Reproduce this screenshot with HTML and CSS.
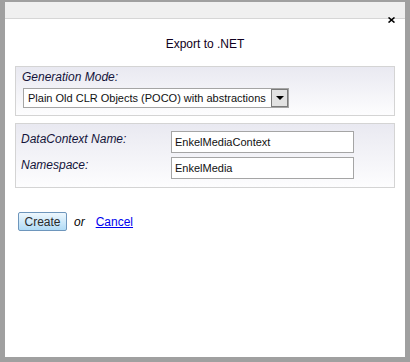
FILE: index.html
```html
<!DOCTYPE html>
<html lang="en">
<head>
    <meta charset="UTF-8">
    <title>Export to .NET</title>
    <link rel="stylesheet" href="styles.css">
</head>
<body>

    <!-- dialog window -->
    <div class="dialog">
        <div class="dialog-header">
            <a class="close-btn" href="#" title="Close">
                <svg width="7" height="6" viewBox="0 0 7 6"><path d="M0.5 0.5 L6.5 5.5 M6.5 0.5 L0.5 5.5" stroke="#000" stroke-width="1.6"/></svg>
            </a>
        </div>

        <div class="dialog-title">Export to .NET</div>

        <div class="box">
            <div class="label">Generation Mode:</div>
            <div class="select">
                <span class="select-text">Plain Old CLR Objects (POCO) with abstractions</span>
                <span class="select-arrow"></span>
            </div>
        </div>

        <div class="box box-fields">
            <label class="label" for="ctx-name">DataContext Name:</label>
            <input id="ctx-name" class="text-input" type="text" value="EnkelMediaContext">
            <label class="label" for="ns">Namespace:</label>
            <input id="ns" class="text-input" type="text" value="EnkelMedia">
        </div>

        <div class="actions">
            <button class="create-btn">Create</button>
            <span class="or">or</span>
            <a class="cancel-link" href="#">Cancel</a>
        </div>
    </div>

</body>
</html>
```

FILE: styles.css
```css
body {
    margin: 0;
    padding: 0;
    background-color: #a0a0a0;
    font-family: 'Liberation Sans', Arial, sans-serif;
    font-size: 12px;
    color: #000;
}

/* dialog window */
.dialog {
    position: relative;
    margin: 2px 5px 0 5px;
    height: 355px;
    background-color: #fff;
}

.dialog-header {
    height: 16px;
    background-color: #f0f0f0;
    border-bottom: 1px solid #d6d6d6;
}

.close-btn {
    position: absolute;
    top: 15px;
    right: 10px;
    line-height: 0;
}

.dialog-title {
    margin-top: 18px;
    text-align: center;
    font-size: 12px;
    line-height: 15px;
    color: #100020;
}

/* grouped boxes */
.box {
    margin: 14px 10px 0 10px;
    padding: 3px 6px 7px 6px;
    border: 1px solid #d4d4d4;
    background: linear-gradient(#e9e9f1, #fdfdfe);
}

.label {
    font-style: italic;
    line-height: 15px;
    color: #14143a;
}

.select {
    display: flex;
    width: 264px;
    height: 18px;
    margin: 3px 0 0 1px;
    border: 1px solid #a5a5a5;
    background-color: #fff;
}

.select-text {
    flex: 1;
    padding-left: 4px;
    font-size: 11px;
    line-height: 18px;
    color: #111;
    white-space: nowrap;
    overflow: hidden;
}

.select-arrow {
    width: 15px;
    border: 1px solid #7a7a7a;
    background-color: #e2e2e2;
    display: flex;
    align-items: center;
    justify-content: center;
}

.select-arrow::after {
    content: "";
    border-left: 4px solid transparent;
    border-right: 4px solid transparent;
    border-top: 4px solid #000;
}

.box-fields {
    margin-top: 7px;
    padding: 7px 6px 8px 5px;
    display: grid;
    grid-template-columns: 150px 183px;
    row-gap: 4px;
}

.box-fields .label {
    margin-top: 1px;
}

.text-input {
    box-sizing: border-box;
    width: 183px;
    height: 22px;
    margin: 0;
    padding: 0 3px;
    border: 1px solid #a5a5a5;
    font-family: 'Liberation Sans', Arial, sans-serif;
    font-size: 11px;
    color: #111;
}

/* buttons */
.actions {
    margin: 24px 0 0 13px;
    display: flex;
    align-items: center;
}

.create-btn {
    box-sizing: border-box;
    width: 49px;
    height: 19px;
    padding: 0;
    border: 1px solid #6e96bc;
    border-radius: 2px;
    background: linear-gradient(#eef7fd, #b0dbf6);
    font-family: 'Liberation Sans', Arial, sans-serif;
    font-size: 12px;
    color: #2a2a2a;
    cursor: pointer;
}

.or {
    margin-left: 7px;
    font-style: italic;
    color: #000;
}

.cancel-link {
    margin-left: 11px;
    color: #0000ee;
}
```
